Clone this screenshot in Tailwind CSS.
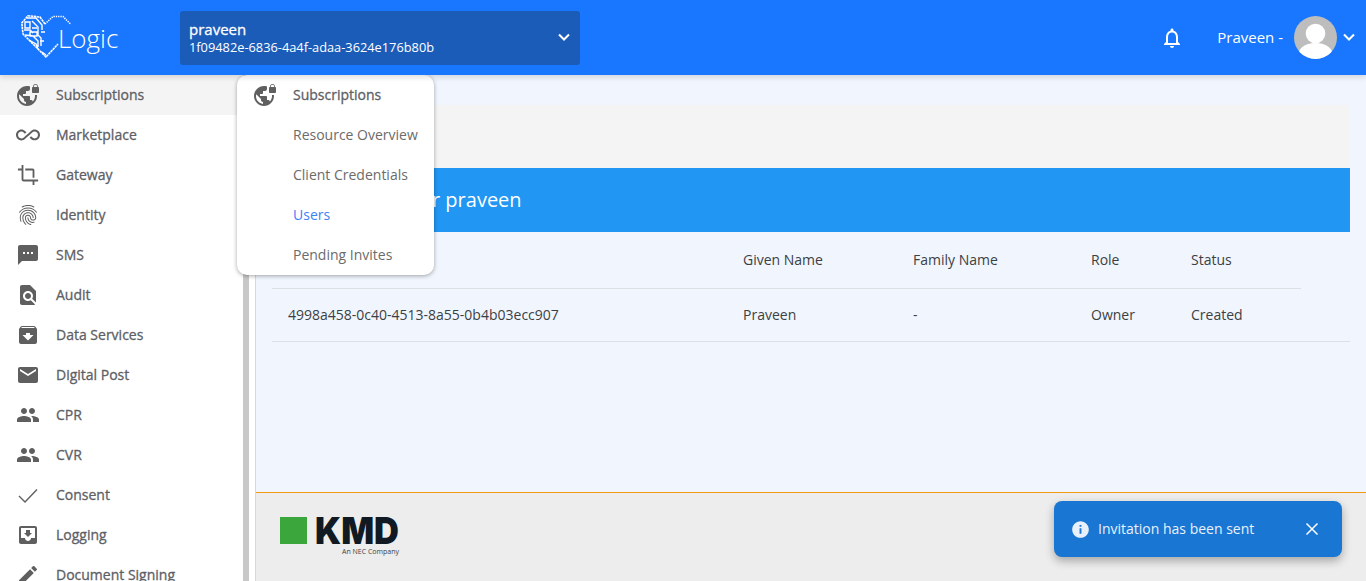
<!DOCTYPE html>
<html lang="en">
<head>
<meta charset="utf-8">
<script src="https://cdn.jsdelivr.net/npm/@tailwindcss/browser@4"></script>
</head>
<body class="font-['Open_Sans',sans-serif]">
<div class="relative w-[1366px] h-[581px] overflow-hidden bg-white flex flex-col">
  <header class="relative z-20 h-[75px] shrink-0 bg-[#1976ff] flex items-center text-white shadow-[0_2px_6px_rgba(0,0,0,0.15)]">
    <div class="w-[180px] flex items-center pl-[21px] shrink-0">
      <svg width="50" height="43" viewBox="0 0 50 43" fill="none" stroke="#fff" class="shrink-0 -mr-[13px] mt-[-3px] overflow-visible">
        <path d="M24 9 L19 2 L7 0.8 L0.8 8 L2 19 L25 42 L37 29" stroke-width="1.6" stroke-dasharray="2.5 0.6"/>
        <path d="M24 9 L32 1.5 L42 1.5 L50 9.5" stroke-width="1.6" stroke-dasharray="1.3 1"/>
        <path d="M4 7h5v6H4zM6 3h9l6 7v5M11 6l6 6v8l3 3v8M3 15h6l3 3M4 20l8 1 5 5v6M11 13h5M9 17h7v4H9zM8 25l7 4 2 5M20 17h4M19 26h4M21 37l4 3" stroke-width="1.4"/>
      </svg>
      <span class="text-[26px] font-light leading-none">Logic</span>
    </div>
    <div class="w-[400px] h-[54px] bg-[#1b5cb9] rounded-[3px] flex items-center justify-between pl-[9px] pr-[9px]">
      <div class="leading-[19px] mt-[1px]">
        <div class="text-[15px] [-webkit-text-stroke:0.3px] mt-[1px] -mb-[1px]">praveen</div>
        <div class="text-[12.8px]">1f09482e-6836-4a4f-adaa-3624e176b80b</div>
      </div>
      <svg width="14" height="9" viewBox="0 0 14 9" fill="none" stroke="#fff" stroke-width="2"><path d="M2 1.5l5 5 5-5"/></svg>
    </div>
    <div class="ml-auto flex items-center">
      <svg width="24" height="24" viewBox="0 0 24 24" fill="#fff" class="mr-[33px]"><path d="M12 22c1.1 0 2-.9 2-2h-4c0 1.1.9 2 2 2zm6-6v-5c0-3.07-1.63-5.64-4.5-6.32V4c0-.83-.67-1.5-1.5-1.5s-1.5.67-1.5 1.5v.68C7.64 5.36 6 7.92 6 11v5l-2 2v1h16v-1l-2-2zm-2 1H8v-6c0-2.48 1.51-4.5 4-4.5s4 2.02 4 4.5v6z"/></svg>
      <span class="text-[15px] mr-[11px]">Praveen -</span>
      <div class="w-[43px] h-[43px] rounded-full bg-[#bdbdbd] overflow-hidden">
        <svg width="43" height="43" viewBox="0 0 43 43" fill="#fff"><circle cx="21.5" cy="17.5" r="9.8"/><path d="M3.5 43c0-11 7-16 18-16s18 5 18 16z"/></svg>
      </div>
      <svg width="14" height="9" viewBox="0 0 14 9" fill="none" stroke="#fff" stroke-width="2" class="ml-[5px] mr-[10px]"><path d="M2 1.5l5 5 5-5"/></svg>
    </div>
  </header>

  <div class="flex flex-1 min-h-0">
    <aside class="w-[256px] shrink-0 bg-white border-r border-[#d9d9d9] flex overflow-hidden">
      <nav class="w-[243px] shrink-0 text-[14px] text-[#5d6065] [-webkit-text-stroke:0.3px]">
        <div class="h-[40px] flex items-center bg-[#f4f4f4]"><svg class="ml-[16px] mr-[16px] shrink-0" width="24" height="24" viewBox="0 0 24 24" fill="#5f5f5f"><path d="M22 4v-.5C22 2.12 20.88 1 19.5 1S17 2.12 17 3.5V4c-.55 0-1 .45-1 1v4c0 .55.45 1 1 1h5c.55 0 1-.45 1-1V5c0-.55-.45-1-1-1zm-.8 0h-3.4v-.5c0-.94.76-1.7 1.7-1.7s1.7.76 1.7 1.7V4zm-2.28 8c.04.33.08.66.08 1 0 2.08-.8 3.97-2.1 5.39-.26-.81-1-1.39-1.9-1.39h-1v-3c0-.55-.45-1-1-1H7v-2h2c.55 0 1-.45 1-1V8h2c1.1 0 2-.9 2-2V3.46c-.95-.3-1.95-.46-3-.46C5.48 3 1 7.48 1 13s4.48 10 10 10 10-4.48 10-10c0-.34-.02-.67-.05-1h-2.03zM10 20.93c-3.95-.49-7-3.85-7-7.93 0-.62.08-1.21.21-1.79L8 16v1c0 1.1.9 2 2 2v1.93z"/></svg><span class="mb-[2px]">Subscriptions</span></div>
        <div class="h-[40px] flex items-center"><svg class="ml-[16px] mr-[16px] shrink-0" width="24" height="24" viewBox="0 0 24 24" fill="#5f5f5f"><path d="M18.6 6.62c-1.44 0-2.8.56-3.77 1.53L12 10.66 10.48 12h.01L7.8 14.39c-.64.64-1.49.99-2.4.99-1.87 0-3.39-1.51-3.39-3.38S3.53 8.62 5.4 8.62c.91 0 1.76.35 2.44 1.03l1.13 1 1.51-1.34L9.22 8.2C8.2 7.18 6.84 6.62 5.4 6.62 2.42 6.62 0 9.04 0 12s2.42 5.38 5.4 5.38c1.44 0 2.8-.56 3.77-1.53l2.83-2.5.01.01L13.52 12h-.01l2.69-2.39c.64-.64 1.49-.99 2.4-.99 1.87 0 3.39 1.51 3.39 3.38s-1.52 3.38-3.39 3.38c-.9 0-1.76-.35-2.44-1.03l-1.14-1.01-1.51 1.34 1.27 1.12c1.02 1.01 2.37 1.57 3.82 1.57 2.98 0 5.4-2.41 5.4-5.38s-2.42-5.37-5.4-5.37z"/></svg><span class="mb-[2px]">Marketplace</span></div>
        <div class="h-[40px] flex items-center"><svg class="ml-[17px] mr-[17px] shrink-0" width="22" height="22" viewBox="0 0 24 24" fill="#5f5f5f"><path d="M17 15h2V7c0-1.1-.9-2-2-2H9v2h8v8zM7 17V1H5v4H1v2h4v10c0 1.1.9 2 2 2h10v4h2v-4h4v-2H7z"/></svg><span class="mb-[2px]">Gateway</span></div>
        <div class="h-[40px] flex items-center"><svg class="ml-[16px] mr-[16px] shrink-0" width="24" height="24" viewBox="0 0 24 24" fill="#5f5f5f"><path d="M17.81 4.47c-.08 0-.16-.02-.23-.06C15.66 3.42 14 3 12.01 3c-1.98 0-3.86.47-5.57 1.41-.24.13-.54.04-.68-.2-.13-.24-.04-.55.2-.68C7.82 2.52 9.86 2 12.01 2c2.13 0 3.99.47 6.03 1.52.25.13.34.43.21.67-.09.18-.26.28-.44.28zM3.5 9.72c-.1 0-.2-.03-.29-.09-.23-.16-.28-.47-.12-.7.99-1.4 2.25-2.5 3.75-3.27C9.98 4.04 14 4.03 17.15 5.65c1.5.77 2.76 1.86 3.75 3.25.16.22.11.54-.12.7-.23.16-.54.11-.7-.12-.9-1.26-2.04-2.25-3.39-2.94-2.87-1.47-6.54-1.47-9.4.01-1.36.7-2.5 1.7-3.4 2.96-.08.14-.23.21-.39.21zm6.25 12.07c-.13 0-.26-.05-.35-.15-.87-.87-1.34-1.43-2.01-2.64-.69-1.23-1.05-2.73-1.05-4.34 0-2.97 2.54-5.39 5.66-5.39s5.66 2.42 5.66 5.39c0 .28-.22.5-.5.5s-.5-.22-.5-.5c0-2.42-2.09-4.39-4.66-4.39-2.57 0-4.66 1.97-4.66 4.39 0 1.44.32 2.77.93 3.85.64 1.15 1.08 1.64 1.85 2.42.19.2.19.51 0 .71-.11.1-.24.15-.37.15zm7.17-1.85c-1.19 0-2.24-.3-3.1-.89-1.49-1.01-2.38-2.65-2.38-4.39 0-.28.22-.5.5-.5s.5.22.5.5c0 1.41.72 2.74 1.94 3.56.71.48 1.54.71 2.54.71.24 0 .64-.03 1.04-.1.27-.05.53.13.58.41.05.27-.13.53-.41.58-.57.11-1.07.12-1.21.12zM14.91 22c-.04 0-.09-.01-.13-.02-1.59-.44-2.63-1.03-3.72-2.1-1.4-1.39-2.17-3.24-2.17-5.22 0-1.62 1.38-2.94 3.08-2.94 1.7 0 3.08 1.32 3.08 2.94 0 1.07.93 1.94 2.08 1.94s2.08-.87 2.08-1.94c0-3.77-3.25-6.83-7.25-6.83-2.84 0-5.44 1.58-6.61 4.03-.39.81-.59 1.76-.59 2.8 0 .78.07 2.01.67 3.61.1.26-.03.55-.29.64-.26.1-.55-.04-.64-.29-.49-1.31-.73-2.61-.73-3.96 0-1.2.23-2.29.68-3.24 1.33-2.79 4.28-4.6 7.51-4.6 4.55 0 8.25 3.51 8.25 7.83 0 1.62-1.38 2.94-3.08 2.94s-3.08-1.32-3.08-2.94c0-1.07-.93-1.94-2.08-1.94s-2.08.87-2.08 1.94c0 1.71.66 3.31 1.87 4.51.95.94 1.86 1.46 3.27 1.85.27.07.42.35.35.61-.05.23-.26.38-.47.38z"/></svg><span class="mb-[2px]">Identity</span></div>
        <div class="h-[40px] flex items-center"><svg class="ml-[16px] mr-[16px] shrink-0" width="24" height="24" viewBox="0 0 24 24" fill="#5f5f5f"><path d="M20 2H4c-1.1 0-1.99.9-1.99 2L2 22l4-4h14c1.1 0 2-.9 2-2V4c0-1.1-.9-2-2-2zM9 11H7V9h2v2zm4 0h-2V9h2v2zm4 0h-2V9h2v2z"/></svg><span class="mb-[2px]">SMS</span></div>
        <div class="h-[40px] flex items-center"><svg class="ml-[16px] mr-[16px] shrink-0" width="24" height="24" viewBox="0 0 24 24" fill="#5f5f5f"><path d="M20 19.59V8l-6-6H6c-1.1 0-1.99.9-1.99 2L4 20c0 1.1.89 2 1.99 2H18c.45 0 .85-.15 1.19-.4l-4.43-4.43c-.8.52-1.74.83-2.76.83-2.76 0-5-2.24-5-5s2.24-5 5-5 5 2.24 5 5c0 1.02-.31 1.96-.83 2.75L20 19.59zM9 13c0 1.66 1.34 3 3 3s3-1.34 3-3-1.34-3-3-3-3 1.34-3 3z"/></svg><span class="mb-[2px]">Audit</span></div>
        <div class="h-[40px] flex items-center"><svg class="ml-[16px] mr-[16px] shrink-0" width="24" height="24" viewBox="0 0 24 24" fill="#5f5f5f"><path d="M20.54 5.23l-1.39-1.68C18.88 3.21 18.47 3 18 3H6c-.47 0-.88.21-1.16.55L3.46 5.23C3.17 5.57 3 6.02 3 6.5V19c0 1.1.9 2 2 2h14c1.1 0 2-.9 2-2V6.5c0-.48-.17-.93-.46-1.27zM12 17.5L6.5 12H10v-2h4v2h3.5L12 17.5zM5.12 5l.81-1h12l.94 1H5.12z"/></svg><span class="mb-[2px]">Data Services</span></div>
        <div class="h-[40px] flex items-center"><svg class="ml-[16px] mr-[16px] shrink-0" width="24" height="24" viewBox="0 0 24 24" fill="#5f5f5f"><path d="M20 4H4c-1.1 0-1.99.9-1.99 2L2 18c0 1.1.9 2 2 2h16c1.1 0 2-.9 2-2V6c0-1.1-.9-2-2-2zm0 4l-8 5-8-5V6l8 5 8-5v2z"/></svg><span class="mb-[2px]">Digital Post</span></div>
        <div class="h-[40px] flex items-center"><svg class="ml-[16px] mr-[16px] shrink-0" width="24" height="24" viewBox="0 0 24 24" fill="#5f5f5f"><path d="M16 11c1.66 0 2.99-1.34 2.99-3S17.66 5 16 5c-1.66 0-3 1.34-3 3s1.34 3 3 3zm-8 0c1.66 0 2.99-1.34 2.99-3S9.66 5 8 5C6.34 5 5 6.34 5 8s1.34 3 3 3zm0 2c-2.33 0-7 1.17-7 3.5V19h14v-2.5c0-2.33-4.67-3.5-7-3.5zm8 0c-.29 0-.62.02-.97.05 1.16.84 1.97 1.97 1.97 3.45V19h6v-2.5c0-2.33-4.67-3.5-7-3.5z"/></svg><span class="mb-[2px]">CPR</span></div>
        <div class="h-[40px] flex items-center"><svg class="ml-[16px] mr-[16px] shrink-0" width="24" height="24" viewBox="0 0 24 24" fill="#5f5f5f"><path d="M16 11c1.66 0 2.99-1.34 2.99-3S17.66 5 16 5c-1.66 0-3 1.34-3 3s1.34 3 3 3zm-8 0c1.66 0 2.99-1.34 2.99-3S9.66 5 8 5C6.34 5 5 6.34 5 8s1.34 3 3 3zm0 2c-2.33 0-7 1.17-7 3.5V19h14v-2.5c0-2.33-4.67-3.5-7-3.5zm8 0c-.29 0-.62.02-.97.05 1.16.84 1.97 1.97 1.97 3.45V19h6v-2.5c0-2.33-4.67-3.5-7-3.5z"/></svg><span class="mb-[2px]">CVR</span></div>
        <div class="h-[40px] flex items-center"><svg class="ml-[16px] mr-[16px] shrink-0" width="24" height="24" viewBox="0 0 24 24" fill="none" stroke="#5f5f5f" stroke-width="1.4"><path d="M3 13l6 6L21 6.500"/></svg><span class="mb-[2px]">Consent</span></div>
        <div class="h-[40px] flex items-center"><svg class="ml-[16px] mr-[16px] shrink-0" width="24" height="24" viewBox="0 0 24 24" fill="#5f5f5f"><path d="M19 3H4.99c-1.11 0-1.98.9-1.98 2L3 19c0 1.1.88 2 1.99 2H19c1.1 0 2-.9 2-2V5c0-1.1-.9-2-2-2zm0 12h-4c0 1.66-1.35 3-3 3s-3-1.34-3-3H4.99V5H19v10zm-3-5h-2V7h-4v3H8l4 4 4-4z"/></svg><span class="mb-[2px]">Logging</span></div>
        <div class="h-[40px] flex items-center"><svg class="ml-[16px] mr-[16px] shrink-0" width="24" height="24" viewBox="0 0 24 24" fill="#5f5f5f"><path d="M3 17.25V21h3.75L17.81 9.94l-3.75-3.75L3 17.25zM20.71 7.04c.39-.39.39-1.02 0-1.41l-2.34-2.34c-.39-.39-1.02-.39-1.41 0l-1.83 1.83 3.75 3.75 1.83-1.83z"/></svg><span class="mb-[2px]">Document Signing</span></div>
      </nav>
      <div class="w-[6px] shrink-0 bg-[#c8c8c8]"></div>
    </aside>

    <main class="flex-1 min-w-0 flex flex-col bg-[#f1f6fe]">
      <div class="flex-1 pt-[30px] pr-[16px]">
        <div class="h-[63px] bg-[#f4f4f4]"></div>
        <div class="h-[64px] bg-[#2196f3] text-white text-[20px] flex items-center pl-[99px]">Users for praveen</div>
        <div class="pl-[16px] text-[14px] text-[#3c4043]">
          <div class="h-[57px] w-[1029px] border-b border-[#dcdfe3] flex items-center pl-[16px] pb-[2px]">
            <span class="w-[455px]">User ID</span><span class="w-[170px]">Given Name</span><span class="w-[178px]">Family Name</span><span class="w-[100px]">Role</span><span>Status</span>
          </div>
          <div class="h-[53px] border-b border-[#dcdfe3] flex items-center pl-[16px] pb-[2px]">
            <span class="w-[455px]">4998a458-0c40-4513-8a55-0b4b03ecc907</span><span class="w-[170px]">Praveen</span><span class="w-[178px]">-</span><span class="w-[100px]">Owner</span><span>Created</span>
          </div>
        </div>
      </div>
      <footer class="h-[89px] shrink-0 bg-[#ededed] border-t border-[#f39c12] pt-[24px] pl-[24px] flex items-start">
        <div class="w-[27px] h-[27px] bg-[#3aa63c] mr-[8px]"></div>
        <div class="flex flex-col items-end w-[84px]">
          <svg width="84" height="27" viewBox="0 0 84 27" class="block overflow-visible"><text x="0" y="27" font-family="Inter, sans-serif" font-weight="900" font-size="37" fill="#111a22" textLength="84" lengthAdjust="spacingAndGlyphs">KMD</text></svg>
          <span class="text-[7px] leading-[12px] mt-[2px] text-[#3c4248] whitespace-nowrap">An NEC Company</span>
        </div>
      </footer>
    </main>
  </div>

  <div class="absolute z-10 left-[237px] top-[75px] w-[197px] h-[200px] bg-white rounded-[10px] shadow-[0_1px_4px_rgba(0,0,0,0.35)] text-[14px] text-[#6b6b6b]">
    <div class="h-[40px] flex items-center text-[#5d6065] [-webkit-text-stroke:0.3px]"><svg class="ml-[16px] mr-[16px] shrink-0" width="24" height="24" viewBox="0 0 24 24" fill="#5f5f5f"><path d="M22 4v-.5C22 2.12 20.88 1 19.5 1S17 2.12 17 3.5V4c-.55 0-1 .45-1 1v4c0 .55.45 1 1 1h5c.55 0 1-.45 1-1V5c0-.55-.45-1-1-1zm-.8 0h-3.4v-.5c0-.94.76-1.7 1.7-1.7s1.7.76 1.7 1.7V4zm-2.28 8c.04.33.08.66.08 1 0 2.08-.8 3.97-2.1 5.39-.26-.81-1-1.39-1.9-1.39h-1v-3c0-.55-.45-1-1-1H7v-2h2c.55 0 1-.45 1-1V8h2c1.1 0 2-.9 2-2V3.46c-.95-.3-1.95-.46-3-.46C5.48 3 1 7.48 1 13s4.48 10 10 10 10-4.48 10-10c0-.34-.02-.67-.05-1h-2.03zM10 20.93c-3.95-.49-7-3.85-7-7.93 0-.62.08-1.21.21-1.79L8 16v1c0 1.1.9 2 2 2v1.93z"/></svg><span class="mb-[2px]">Subscriptions</span></div>
    <div class="h-[40px] flex items-center pl-[56px] pb-[2px]">Resource Overview</div>
    <div class="h-[40px] flex items-center pl-[56px] pb-[2px]">Client Credentials</div>
    <div class="h-[40px] flex items-center pl-[56px] pb-[2px] text-[#3b82f6]">Users</div>
    <div class="h-[40px] flex items-center pl-[56px] pb-[2px]">Pending Invites</div>
  </div>

  <div class="absolute z-10 left-[1054px] top-[501px] w-[288px] h-[56px] bg-[#1976d2] rounded-[8px] shadow-[0_4px_10px_rgba(0,0,0,0.3)] flex items-center pl-[17px] text-white text-[14px]">
    <svg width="19" height="19" viewBox="0 0 24 24" fill="#e8f1fb" class="mr-[8px] shrink-0"><path d="M12 1.5C6.2 1.5 1.5 6.2 1.5 12S6.2 22.5 12 22.5 22.5 17.8 22.5 12 17.8 1.5 12 1.5zm1.2 16h-2.4v-7h2.4v7zm0-9h-2.4V6.2h2.4V8.5z"/></svg>
    <span class="text-[#e8f1fb] mb-[2px]">Invitation has been sent</span>
    <svg width="14" height="14" viewBox="0 0 14 14" fill="none" stroke="#fff" stroke-width="1.5" class="ml-auto mr-[23px]"><path d="M1.5 1.5l11 11M12.5 1.5l-11 11"/></svg>
  </div>
</div>
</body>
</html>
